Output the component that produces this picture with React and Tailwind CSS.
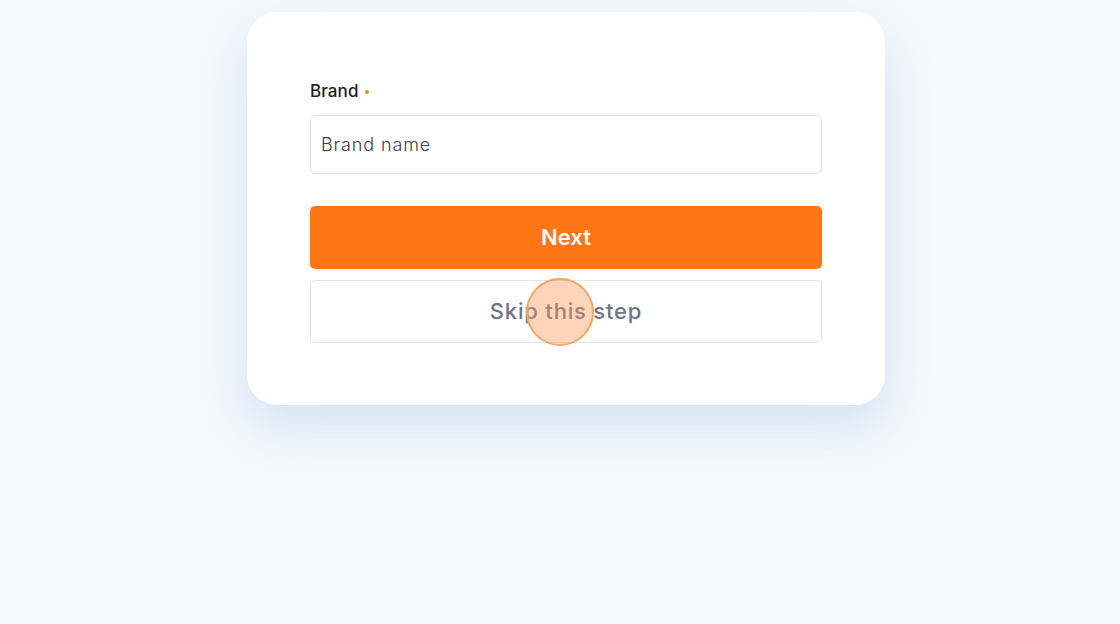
export default function App() {
  return (
    <div className="min-h-[624px] w-full bg-[#f4f9fd] pt-3 pl-3" style={{ fontFamily: "Inter, 'Noto Sans', sans-serif" }}>
      <div className="mx-auto w-[638px] rounded-[30px] bg-white px-[63px] pt-[68px] pb-[62px] shadow-[0_22px_48px_rgba(170,200,230,0.45)]">
        <div className="mb-[11px] flex h-6 items-center gap-[6px] text-[17px] font-medium tracking-[0.1px] text-[#1c1f26]">
          <span>Brand</span>
          <span className="h-[4px] w-[4px] rounded-full bg-[#f0822a]" />
        </div>
        <div className="flex h-[59px] items-center rounded-[5px] border border-[#e3e5ea] px-[10px] text-[18px] font-light tracking-[0.9px] text-[#3d4048]">
          Brand name
        </div>
        <button className="mt-8 flex h-[63px] w-full items-center justify-center rounded-[5px] bg-[#ff7615] text-[22px] font-semibold text-white">
          Next
        </button>
        <div className="relative mt-[11px]">
          <button className="flex h-[63px] w-full items-center justify-center rounded-[5px] border border-[#e3e5ea] bg-white text-[22px] font-medium tracking-[0.8px] text-[#6b7487]">
            Skip this step
          </button>
          <div className="absolute left-[216px] top-[-2px] h-[68px] w-[68px] rounded-full border-2 border-[#f6a561] bg-[rgba(253,150,80,0.4)]" />
        </div>
      </div>
    </div>
  );
}
